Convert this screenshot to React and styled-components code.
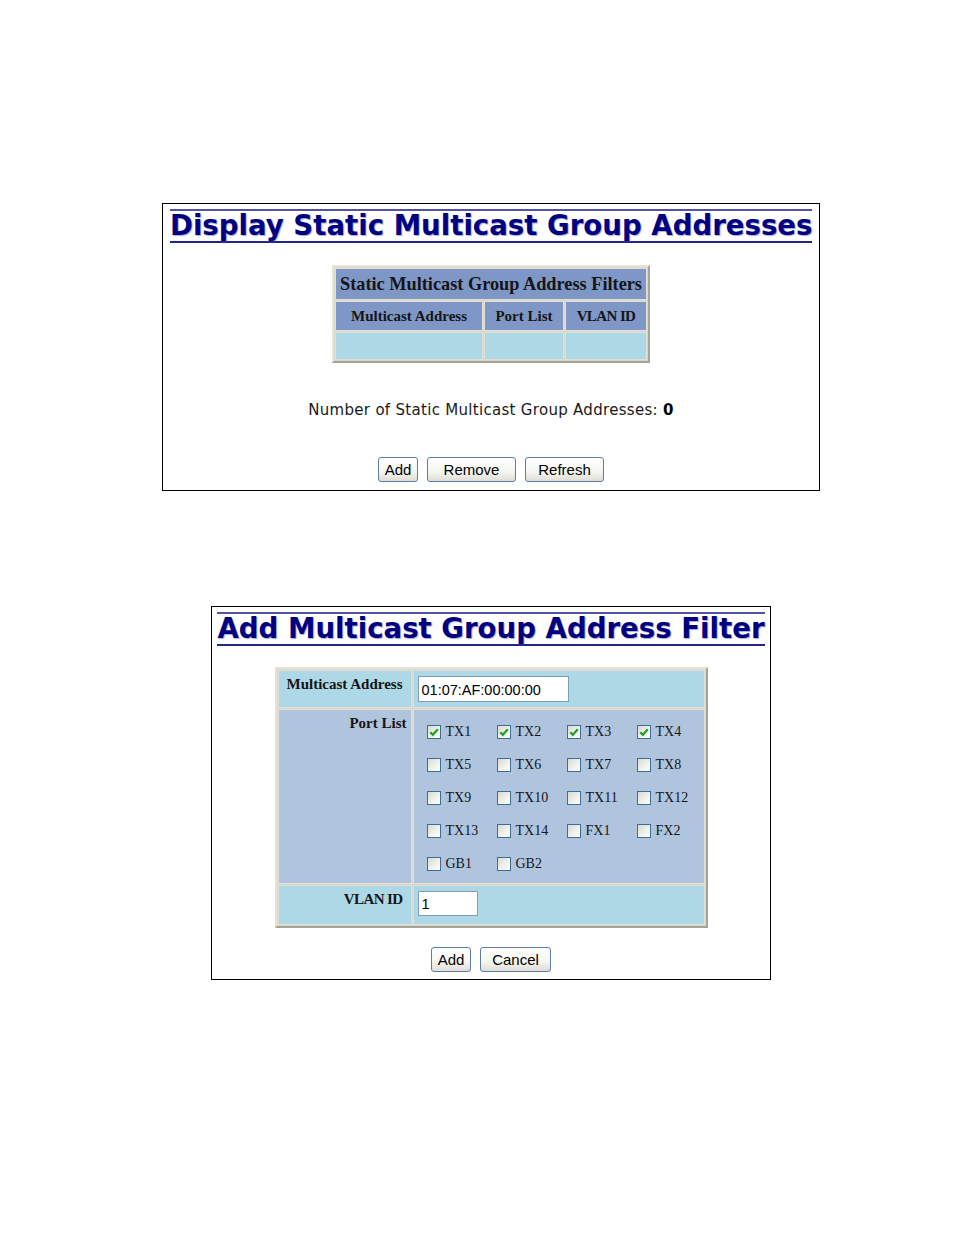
import React from "react";
import styled, { createGlobalStyle } from "styled-components";

const GlobalStyle = createGlobalStyle`
  html, body {
    margin: 0;
    padding: 0;
    background: #fff;
  }
  body {
    font-family: "DejaVu Sans", Verdana, sans-serif;
    color: #000;
  }
`;

const ports = [
  { name: "TX1", on: true },
  { name: "TX2", on: true },
  { name: "TX3", on: true },
  { name: "TX4", on: true },
  { name: "TX5" },
  { name: "TX6" },
  { name: "TX7" },
  { name: "TX8" },
  { name: "TX9" },
  { name: "TX10" },
  { name: "TX11" },
  { name: "TX12" },
  { name: "TX13" },
  { name: "TX14" },
  { name: "FX1" },
  { name: "FX2" },
  { name: "GB1" },
  { name: "GB2" },
];

const App = () => {
  return (
    <>
      <GlobalStyle />
      <Page>
        <Panel $width={658} $px={7} $pb={8}>
          <Title>Display Static Multicast Group Addresses</Title>
          <Grid $mt={22} $w={318}>
            <colgroup>
              <Col $w={148} />
              <Col $w={80} />
              <Col $w={82} />
            </colgroup>
            <tbody>
              <tr>
                <HeadCell colSpan={3} $h={32} $size={18.3}>
                  Static Multicast Group Address Filters
                </HeadCell>
              </tr>
              <tr>
                <HeadCell $h={30} $size={15}>
                  Multicast Address
                </HeadCell>
                <HeadCell $h={30} $size={15}>
                  Port List
                </HeadCell>
                <HeadCell $h={30} $size={15} $tight>
                  VLAN ID
                </HeadCell>
              </tr>
              <tr>
                <DataCell $h={28} />
                <DataCell $h={28} />
                <DataCell $h={28} />
              </tr>
            </tbody>
          </Grid>
          <Count>
            Number of Static Multicast Group Addresses: <b>0</b>
          </Count>
          <Buttons $mt={38}>
            <Button $w={40}>Add</Button>
            <Button $w={89}>Remove</Button>
            <Button $w={79}>Refresh</Button>
          </Buttons>
        </Panel>

        <Panel $width={560} $px={5} $pb={7} $mt={115}>
          <Title>Add Multicast Group Address Filter</Title>
          <Grid $mt={21} $w={433}>
            <colgroup>
              <Col $w={134} />
              <Col $w={292} />
            </colgroup>
            <tbody>
              <tr>
                <Label $h={38} $pr={8}>
                  Multicast Address
                </Label>
                <Value $h={38}>
                  <TextInput $w={151} defaultValue="01:07:AF:00:00:00" />
                </Value>
              </tr>
              <tr>
                <Label $h={175} $pr={4} $bg="#b0c4de">
                  Port List
                </Label>
                <Value $h={175} $bg="#b0c4de">
                  <PortGrid>
                    {ports.map((p) => (
                      <Port key={p.name}>
                        <Box>
                          {p.on && (
                            <svg width="12" height="12" viewBox="0 0 12 12">
                              <polyline
                                points="2.3,6.2 4.8,8.8 9.8,3.3"
                                fill="none"
                                stroke="#21a321"
                                strokeWidth="2.2"
                              />
                            </svg>
                          )}
                        </Box>
                        {p.name}
                      </Port>
                    ))}
                  </PortGrid>
                </Value>
              </tr>
              <tr>
                <Label $h={40} $pr={8} $tight>
                  VLAN ID
                </Label>
                <Value $h={40}>
                  <TextInput $w={60} $h={25} defaultValue="1" />
                </Value>
              </tr>
            </tbody>
          </Grid>
          <Buttons $mt={19}>
            <Button $w={40}>Add</Button>
            <Button $w={71}>Cancel</Button>
          </Buttons>
        </Panel>
      </Page>
    </>
  );
};

const Page = styled.div`
  width: 954px;
  min-height: 1235px;
  box-sizing: border-box;
  padding: 203px 0 0 28px;
  display: flex;
  flex-direction: column;
  align-items: center;
`;

const Panel = styled.div`
  box-sizing: border-box;
  width: ${(p) => p.$width}px;
  margin-top: ${(p) => p.$mt || 0}px;
  padding: 5px ${(p) => p.$px}px ${(p) => p.$pb}px;
  border: 1px solid #000;
  display: flex;
  flex-direction: column;
  align-items: center;
`;

const Title = styled.h1`
  align-self: stretch;
  margin: 0;
  border-top: 2px solid #5252a8;
  border-bottom: 2px solid #24248c;
  font: bold 27.6px/30px "DejaVu Sans", Verdana, sans-serif;
  color: #000080;
  text-align: center;
  white-space: nowrap;
  text-shadow: 1px 1px 1px rgba(60, 60, 160, 0.45);
`;

const Grid = styled.table`
  width: ${(p) => p.$w}px;
  margin-top: ${(p) => p.$mt}px;
  border-collapse: separate;
  border-spacing: 1px;
  border: 2px solid;
  border-color: #e6e4da #a6a496 #a6a496 #e6e4da;
  background: #d9d7cb;
  table-layout: fixed;
`;

const Col = styled.col`
  width: ${(p) => p.$w}px;
`;

const HeadCell = styled.td`
  box-sizing: border-box;
  height: ${(p) => p.$h}px;
  padding: 0;
  border: 1px solid #e2e0d6;
  background: #7f97c6;
  text-align: center;
  vertical-align: middle;
  font: bold ${(p) => p.$size}px "Liberation Serif", "Times New Roman", serif;
  letter-spacing: ${(p) => (p.$tight ? "-0.6px" : "0")};
  color: #151515;
  white-space: nowrap;
`;

const DataCell = styled.td`
  box-sizing: border-box;
  height: ${(p) => p.$h}px;
  padding: 0;
  border: 1px solid #e2e0d6;
  background: #add8e6;
`;

const Label = styled.td`
  box-sizing: border-box;
  height: ${(p) => p.$h}px;
  padding: 5px ${(p) => p.$pr}px 0 4px;
  border: 1px solid #e2e0d6;
  background: ${(p) => p.$bg || "#add8e6"};
  text-align: right;
  vertical-align: top;
  font: bold 15px "Liberation Serif", "Times New Roman", serif;
  letter-spacing: ${(p) => (p.$tight ? "-0.6px" : "0")};
  color: #151515;
  white-space: nowrap;
`;

const Value = styled.td`
  box-sizing: border-box;
  height: ${(p) => p.$h}px;
  padding: 5px 4px 0;
  border: 1px solid #e2e0d6;
  background: ${(p) => p.$bg || "#add8e6"};
  vertical-align: top;
`;

const TextInput = styled.input`
  box-sizing: border-box;
  display: block;
  width: ${(p) => p.$w}px;
  height: ${(p) => p.$h || 26}px;
  margin: 0;
  padding: 1px 3px 0;
  border: 1px solid #7f9db9;
  background: #fff;
  font: 14.5px "Liberation Sans", Arial, sans-serif;
  color: #000;
  outline: none;
`;

const PortGrid = styled.div`
  display: grid;
  grid-template-columns: repeat(4, 70px);
  grid-auto-rows: 33px;
  padding: 0 0 0 9px;
`;

const Port = styled.label`
  display: flex;
  align-items: center;
  gap: 5px;
  font: 14px "Liberation Serif", "Times New Roman", serif;
  color: #161616;
  white-space: nowrap;
`;

const Box = styled.span`
  box-sizing: border-box;
  width: 14px;
  height: 14px;
  flex: none;
  display: flex;
  align-items: center;
  justify-content: center;
  border: 1px solid #3d6d99;
  background: linear-gradient(135deg, #d9d9d2 0%, #f1f1ec 55%, #fdfdfb 100%);
`;

const Count = styled.p`
  margin: 38px 0 0;
  font: 15px/18px "DejaVu Sans", Verdana, sans-serif;
  letter-spacing: 0.3px;
  color: #1a1a1a;
  b {
    font-weight: bold;
    color: #000;
  }
`;

const Buttons = styled.div`
  margin-top: ${(p) => p.$mt}px;
  display: flex;
  gap: 9px;
`;

const Button = styled.button`
  box-sizing: border-box;
  width: ${(p) => p.$w}px;
  height: 25px;
  padding: 0;
  border: 1px solid #5d7fa6;
  border-radius: 3px;
  background: linear-gradient(#ffffff 0%, #f5f5f1 60%, #dedcd4 100%);
  font: 15px "Liberation Sans", Arial, sans-serif;
  color: #000;
  cursor: pointer;
`;

export default App;
